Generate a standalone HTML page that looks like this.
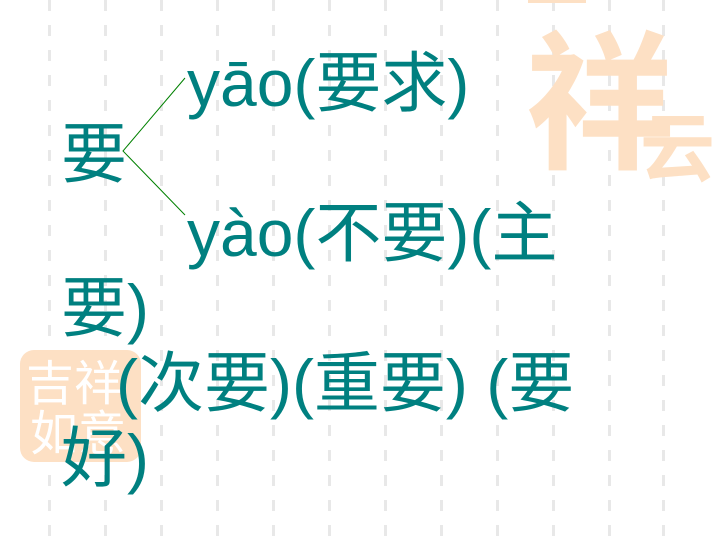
<!DOCTYPE html>
<html><head><meta charset="utf-8"><style>
body{margin:0;width:720px;height:540px;background:#fff;position:relative;overflow:hidden;font-family:"Liberation Sans","Noto Sans CJK SC",sans-serif;}
.vl{position:absolute;top:0;width:3px;height:540px;background:repeating-linear-gradient(to bottom,#e8e8e8 0 11px,transparent 11px 25px);}
.t{position:absolute;color:#008080;font-size:66px;line-height:1;white-space:nowrap;}
.pe{position:absolute;color:#fde0c4;font-family:"Noto Sans CJK SC",sans-serif;line-height:1;}
</style></head><body>
<div class="vl" style="left:48px"></div><div class="vl" style="left:104px"></div><div class="vl" style="left:160px"></div><div class="vl" style="left:216px"></div><div class="vl" style="left:272px"></div><div class="vl" style="left:328px"></div><div class="vl" style="left:384px"></div><div class="vl" style="left:440px"></div><div class="vl" style="left:496px"></div><div class="vl" style="left:552px"></div><div class="vl" style="left:608px"></div><div class="vl" style="left:662px"></div>
<div style="position:absolute;left:528px;top:0;width:58px;height:3px;background:#fde0c4"></div>
<div class="pe" style="left:525px;top:18px;font-size:150px;font-weight:bold;">祥</div>
<div class="pe" style="left:640px;top:105px;font-size:75px;font-weight:bold;">云</div>
<div style="position:absolute;left:20px;top:350px;width:121px;height:112px;background:#fde0c4;border-radius:14px;"></div>
<div class="pe" style="left:26px;top:355px;font-size:48px;color:#fff;">吉祥</div>
<div class="pe" style="left:30px;top:405px;font-size:48px;color:#fff;">如意</div>
<svg style="position:absolute;left:0;top:0" width="720" height="540"><polyline points="185,78 123,151 185,215" fill="none" stroke="#008000" stroke-width="1"/></svg>
<div class="t" style="left:187px;top:50px">yāo(要求)</div>
<div class="t" style="left:61px;top:121px">要</div>
<div class="t" style="left:187px;top:200px">yào(不要)(主</div>
<div class="t" style="left:61px;top:275px">要)</div>
<div class="t" style="left:116px;top:350px">(次要)(重要) (要</div>
<div class="t" style="left:61px;top:425px">好)</div>
</body></html>
